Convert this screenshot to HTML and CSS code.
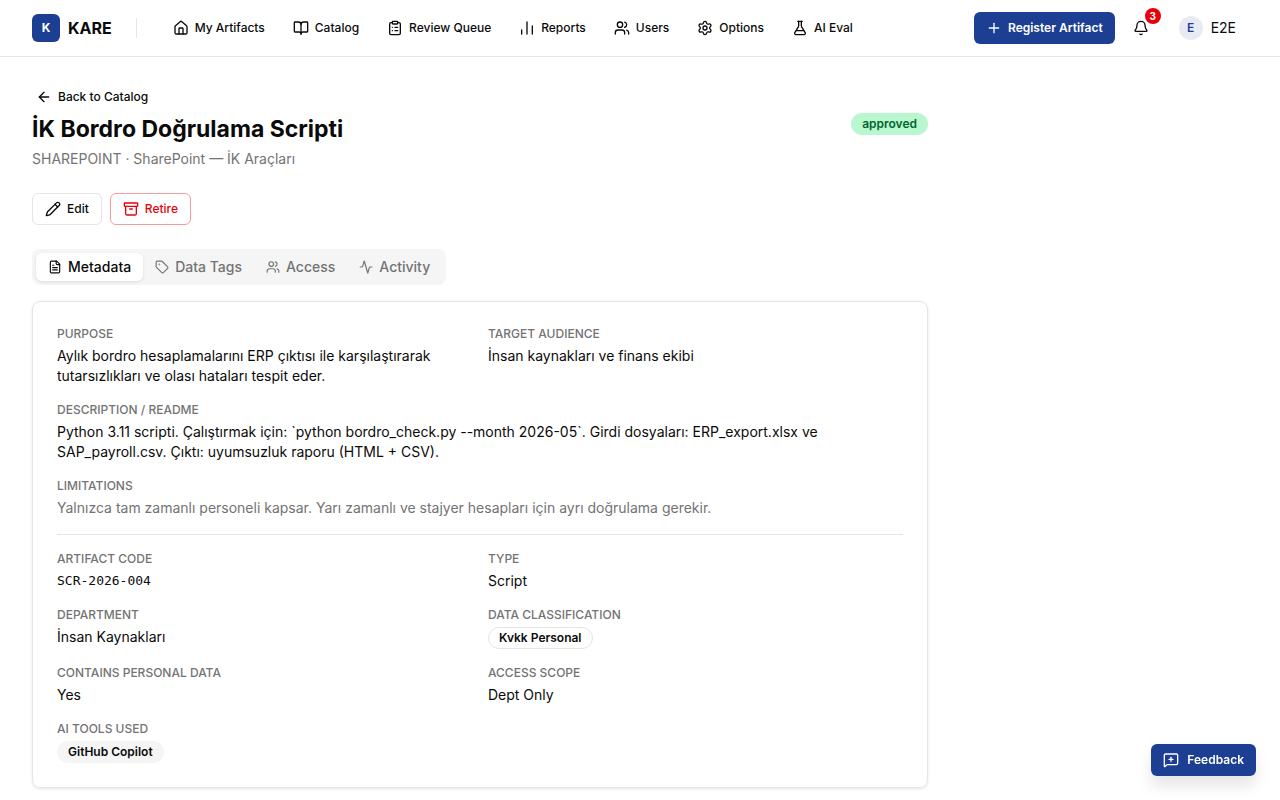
FILE: index.html
```html
<!DOCTYPE html>
<html lang="en">
  <head>
    <meta charset="utf-8">
    <meta name="viewport" content="width=device-width, initial-scale=1">
    <title>KARE</title>
    <link rel="stylesheet" href="styles.css">
  </head>
  <body>
    <!-- Top bar -->
    <header class="topbar">
      <a class="brand" href="#"><span class="brand-mark">K</span>KARE</a>
      <nav class="nav">
        <a href="#"><svg class="icon" viewBox="0 0 24 24"><path d="M15 21v-8a1 1 0 0 0-1-1h-4a1 1 0 0 0-1 1v8"/><path d="M3 10a2 2 0 0 1 .709-1.528l7-5.999a2 2 0 0 1 2.582 0l7 5.999A2 2 0 0 1 21 10v9a2 2 0 0 1-2 2H5a2 2 0 0 1-2-2z"/></svg>My Artifacts</a>
        <a href="#"><svg class="icon" viewBox="0 0 24 24"><path d="M12 7v14"/><path d="M3 18a1 1 0 0 1-1-1V4a1 1 0 0 1 1-1h5a4 4 0 0 1 4 4 4 4 0 0 1 4-4h5a1 1 0 0 1 1 1v13a1 1 0 0 1-1 1h-6a3 3 0 0 0-3 3 3 3 0 0 0-3-3z"/></svg>Catalog</a>
        <a href="#"><svg class="icon" viewBox="0 0 24 24"><rect width="8" height="4" x="8" y="2" rx="1"/><path d="M16 4h2a2 2 0 0 1 2 2v14a2 2 0 0 1-2 2H6a2 2 0 0 1-2-2V6a2 2 0 0 1 2-2h2"/><path d="M12 11h4"/><path d="M12 16h4"/><path d="M8 11h.01"/><path d="M8 16h.01"/></svg>Review Queue</a>
        <a href="#"><svg class="icon" viewBox="0 0 24 24"><path d="M4 21v-6"/><path d="M12 21V3"/><path d="M20 21V9"/></svg>Reports</a>
        <a href="#"><svg class="icon" viewBox="0 0 24 24"><path d="M16 21v-2a4 4 0 0 0-4-4H6a4 4 0 0 0-4 4v2"/><path d="M16 3.128a4 4 0 0 1 0 7.744"/><path d="M22 21v-2a4 4 0 0 0-3-3.870"/><circle cx="9" cy="7" r="4"/></svg>Users</a>
        <a href="#"><svg class="icon" viewBox="0 0 24 24"><path d="M9.671 4.136a2.340 2.340 0 0 1 4.659 0 2.340 2.340 0 0 0 3.319 1.915 2.340 2.340 0 0 1 2.330 4.033 2.340 2.340 0 0 0 0 3.831 2.340 2.340 0 0 1-2.330 4.033 2.340 2.340 0 0 0-3.319 1.915 2.340 2.340 0 0 1-4.659 0 2.340 2.340 0 0 0-3.320-1.915 2.340 2.340 0 0 1-2.330-4.033 2.340 2.340 0 0 0 0-3.831A2.340 2.340 0 0 1 6.350 6.051a2.340 2.340 0 0 0 3.319-1.915"/><circle cx="12" cy="12" r="3"/></svg>Options</a>
        <a href="#"><svg class="icon" viewBox="0 0 24 24"><path d="M10 2v6.300a4 4 0 0 1-.500 1.900L4.200 19a2 2 0 0 0 1.700 3h12.200a2 2 0 0 0 1.700-3l-5.300-8.800a4 4 0 0 1-.500-1.900V2"/><path d="M8.500 2h7"/><path d="M7 16h10"/></svg>AI Eval</a>
      </nav>
      <div class="topbar-right">
        <button class="btn btn-primary" type="button"><svg class="icon" viewBox="0 0 24 24"><path d="M5 12h14"/><path d="M12 5v14"/></svg>Register Artifact</button>
        <button class="bell" type="button" aria-label="Notifications">
          <svg class="icon" viewBox="0 0 24 24"><path d="M10.268 21a2 2 0 0 0 3.464 0"/><path d="M3.262 15.326A1 1 0 0 0 4 17h16a1 1 0 0 0 .740-1.673C19.410 13.956 18 12.499 18 8A6 6 0 0 0 6 8c0 4.499-1.411 5.956-2.738 7.326"/></svg>
          <span class="bell-count">3</span>
        </button>
        <button class="user" type="button"><span class="avatar">E</span>E2E</button>
      </div>
    </header>

    <main class="page">
      <a class="back" href="#"><svg class="icon" viewBox="0 0 24 24"><path d="m12 19-7-7 7-7"/><path d="M19 12H5"/></svg>Back to Catalog</a>
      <div class="heading">
        <div>
          <h1>İK Bordro Doğrulama Scripti</h1>
          <p class="subtitle">SHAREPOINT · SharePoint — İK Araçları</p>
        </div>
        <span class="badge badge-green">approved</span>
      </div>

      <div class="actions">
        <button class="btn btn-outline" type="button"><svg class="icon" viewBox="0 0 24 24"><path d="M21.174 6.812a1 1 0 0 0-3.986-3.987L3.842 16.174a2 2 0 0 0-.500.830l-1.321 4.352a.500.500 0 0 0 .623.622l4.353-1.320a2 2 0 0 0 .830-.497z"/><path d="m15 5 4 4"/></svg>Edit</button>
        <button class="btn btn-danger" type="button"><svg class="icon" viewBox="0 0 24 24"><rect width="20" height="5" x="2" y="3" rx="1"/><path d="M4 8v11a2 2 0 0 0 2 2h12a2 2 0 0 0 2-2V8"/><path d="M10 12h4"/></svg>Retire</button>
      </div>

      <div class="tabs" role="tablist">
        <button class="tab active" type="button" role="tab" aria-selected="true"><svg class="icon icon-sm" viewBox="0 0 24 24"><path d="M15 2H6a2 2 0 0 0-2 2v16a2 2 0 0 0 2 2h12a2 2 0 0 0 2-2V7z"/><path d="M14 2v4a2 2 0 0 0 2 2h4"/><path d="M10 9H8"/><path d="M16 13H8"/><path d="M16 17H8"/></svg>Metadata</button>
        <button class="tab" type="button" role="tab" aria-selected="false"><svg class="icon icon-sm" viewBox="0 0 24 24"><path d="M12.586 2.586A2 2 0 0 0 11.172 2H4a2 2 0 0 0-2 2v7.172a2 2 0 0 0 .586 1.414l8.704 8.704a2.426 2.426 0 0 0 3.420 0l6.580-6.580a2.426 2.426 0 0 0 0-3.420z"/><circle cx="7.500" cy="7.500" r=".500"/></svg>Data Tags</button>
        <button class="tab" type="button" role="tab" aria-selected="false"><svg class="icon icon-sm" viewBox="0 0 24 24"><path d="M16 21v-2a4 4 0 0 0-4-4H6a4 4 0 0 0-4 4v2"/><path d="M16 3.128a4 4 0 0 1 0 7.744"/><path d="M22 21v-2a4 4 0 0 0-3-3.870"/><circle cx="9" cy="7" r="4"/></svg>Access</button>
        <button class="tab" type="button" role="tab" aria-selected="false"><svg class="icon icon-sm" viewBox="0 0 24 24"><path d="M22 12h-2.480a2 2 0 0 0-1.930 1.460l-2.350 8.360a.250.250 0 0 1-.480 0L9.240 2.180a.250.250 0 0 0-.480 0l-2.350 8.360A2 2 0 0 1 4.490 12H2"/></svg>Activity</button>
      </div>

      <!-- Metadata panel -->
      <section class="card">
        <dl class="fields">
          <div><dt>Purpose</dt><dd>Aylık bordro hesaplamalarını ERP çıktısı ile karşılaştırarak tutarsızlıkları ve olası hataları tespit eder.</dd></div>
          <div><dt>Target Audience</dt><dd>İnsan kaynakları ve finans ekibi</dd></div>
          <div class="wide"><dt>Description / Readme</dt><dd>Python 3.11 scripti. Çalıştırmak için: `python bordro_check.py --month 2026-05`. Girdi dosyaları: ERP_export.xlsx ve SAP_payroll.csv. Çıktı: uyumsuzluk raporu (HTML + CSV).</dd></div>
          <div class="wide"><dt>Limitations</dt><dd class="muted">Yalnızca tam zamanlı personeli kapsar. Yarı zamanlı ve stajyer hesapları için ayrı doğrulama gerekir.</dd></div>
        </dl>
        <hr>
        <dl class="fields">
          <div><dt>Artifact Code</dt><dd class="mono">SCR-2026-004</dd></div>
          <div><dt>Type</dt><dd>Script</dd></div>
          <div><dt>Department</dt><dd>İnsan Kaynakları</dd></div>
          <div><dt>Data Classification</dt><dd class="badges"><span class="badge badge-outline">Kvkk Personal</span></dd></div>
          <div><dt>Contains Personal Data</dt><dd>Yes</dd></div>
          <div><dt>Access Scope</dt><dd>Dept Only</dd></div>
          <div class="wide"><dt>AI Tools Used</dt><dd class="badges"><span class="badge badge-gray">GitHub Copilot</span></dd></div>
        </dl>
      </section>
    </main>

    <button class="btn btn-primary feedback" type="button"><svg class="icon" viewBox="0 0 24 24"><path d="M22 17a2 2 0 0 1-2 2H6.828a2 2 0 0 0-1.414.586l-2.202 2.202A.710.710 0 0 1 2 21.286V5a2 2 0 0 1 2-2h16a2 2 0 0 1 2 2z"/><path d="M12 8v6"/><path d="M9 11h6"/></svg>Feedback</button>
  </body>
</html>
```

FILE: styles.css
```css
* {
  box-sizing: border-box;
}

body {
  margin: 0;
  background: #fff;
  color: #0a0a0a;
  font-family: Inter, "Liberation Sans", sans-serif;
  font-size: 14px;
  line-height: 20px;
}

h1, p, dl, dd {
  margin: 0;
}

a {
  color: inherit;
  text-decoration: none;
}

button {
  font: inherit;
  color: inherit;
  border: 0;
  background: none;
  cursor: pointer;
}

.icon {
  width: 16px;
  height: 16px;
  flex: none;
  fill: none;
  stroke: currentColor;
  stroke-width: 2;
  stroke-linecap: round;
  stroke-linejoin: round;
}

.icon-sm {
  width: 14px;
  height: 14px;
}

/* top bar */
.topbar {
  display: flex;
  align-items: center;
  height: 57px;
  padding: 0 32px;
  border-bottom: 1px solid #e5e5e5;
}

.brand {
  display: flex;
  align-items: center;
  gap: 8px;
  font-size: 16px;
  font-weight: 700;
}

.brand::after {
  content: "";
  width: 1px;
  height: 20px;
  margin-left: 16px;
  background: #e5e5e5;
}

.brand-mark {
  display: flex;
  align-items: center;
  justify-content: center;
  width: 28px;
  height: 28px;
  border-radius: 6px;
  background: #1c3f94;
  color: #fff;
  font-size: 12px;
}

.nav {
  display: flex;
  gap: 28px;
  margin-left: 36px;
}

.nav a,
.back {
  display: flex;
  align-items: center;
  gap: 6px;
  font-size: 12px;
  font-weight: 500;
}

.topbar-right {
  display: flex;
  align-items: center;
  gap: 10px;
  margin-left: auto;
}

.btn {
  display: flex;
  align-items: center;
  gap: 6px;
  height: 32px;
  padding: 0 12px;
  border-radius: 6px;
  font-size: 12px;
  font-weight: 500;
}

.btn-primary {
  background: #1c3f94;
  color: #fff;
  font-weight: 600;
}

.btn-outline {
  border: 1px solid #e5e5e5;
}

.btn-danger {
  border: 1px solid #f59a9f;
  color: #e7000b;
}

.bell {
  position: relative;
  display: flex;
  align-items: center;
  justify-content: center;
  width: 32px;
  height: 32px;
  padding: 0;
}

.bell-count {
  position: absolute;
  top: -4px;
  right: -4px;
  width: 16px;
  height: 16px;
  border-radius: 8px;
  background: #e7000b;
  color: #fff;
  font-size: 10px;
  font-weight: 700;
  line-height: 16px;
  text-align: center;
}

.user {
  display: flex;
  align-items: center;
  gap: 8px;
  padding: 0 12px;
}

.avatar {
  width: 24px;
  height: 24px;
  border-radius: 12px;
  background: #e8ebf4;
  color: #1c3f94;
  font-size: 12px;
  font-weight: 600;
  line-height: 24px;
  text-align: center;
}

/* artifact page */
.page {
  max-width: 960px;
  padding: 24px 32px 12px;
}

.back {
  width: fit-content;
  height: 32px;
  padding: 0 4px;
}

.heading {
  display: flex;
  align-items: flex-start;
  justify-content: space-between;
}

h1 {
  font-size: 23px;
  font-weight: 700;
  line-height: 32px;
}

.subtitle {
  margin-top: 4px;
}

.subtitle,
.muted {
  color: #737373;
}

.actions {
  display: flex;
  gap: 8px;
  margin: 24px 0;
}

.tabs {
  display: flex;
  width: fit-content;
  margin-bottom: 16px;
  padding: 4px;
  border-radius: 8px;
  background: #f5f5f5;
}

.tab {
  display: flex;
  align-items: center;
  gap: 6px;
  height: 28px;
  padding: 0 12px;
  border-radius: 6px;
  color: #737373;
  font-weight: 500;
}

.tab.active {
  background: #fff;
  color: #0a0a0a;
  box-shadow: 0 1px 3px #0000001a;
}

.card {
  padding: 24px;
  border: 1px solid #e5e5e5;
  border-radius: 8px;
  box-shadow: 0 1px 3px #0000001a;
}

.card hr {
  height: 1px;
  margin: 16px 0;
  border: 0;
  background: #e5e5e5;
}

.fields {
  display: grid;
  grid-template-columns: 1fr 1fr;
  gap: 16px;
}

.wide {
  grid-column: 1 / -1;
}

dt {
  margin-bottom: 4px;
  color: #737373;
  font-size: 12px;
  font-weight: 500;
  line-height: 16px;
  text-transform: uppercase;
}

.mono {
  font-family: "DejaVu Sans Mono", monospace;
  font-size: 13px;
}

.badges {
  display: flex;
}

.badge {
  padding: 2px 10px;
  border: 1px solid transparent;
  border-radius: 11px;
  font-size: 12px;
  font-weight: 600;
  line-height: 16px;
}

.badge-green {
  background: #b9f8cf;
  color: #016630;
}

.badge-outline {
  border-color: #e5e5e5;
}

.badge-gray {
  background: #f5f5f5;
}

.feedback {
  position: fixed;
  right: 24px;
  bottom: 24px;
  gap: 8px;
  box-shadow: 0 10px 15px #0000001a;
}
```
